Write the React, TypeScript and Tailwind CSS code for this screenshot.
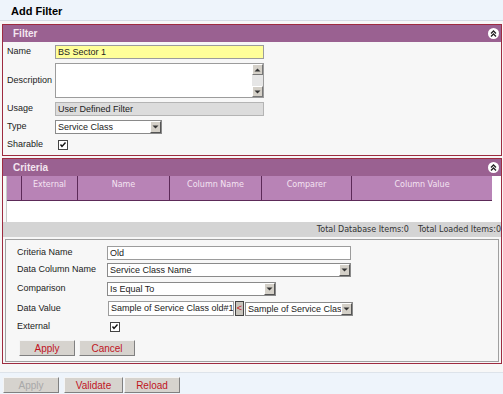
const Arrow: React.FC<{ up?: boolean }> = ({ up }) => (
    <svg width="7" height="4" viewBox="0 0 7 4">
        <path
            d={up ? "M0.5 3.5 L3.5 0.5 L6.5 3.5 Z" : "M0.5 0.5 L3.5 3.5 L6.5 0.5 Z"}
            fill="#333"
        />
    </svg>
);

const SelectBox: React.FC<{ text: string; w: string }> = ({ text, w }) => (
    <div className={`flex h-[14px] ${w} items-center border border-[#8a8a8a] bg-white`}>
        <span className="flex-1 overflow-hidden whitespace-nowrap pl-[2px] leading-[12px]">
            {text}
        </span>
        <div className="flex h-[12px] w-[11px] shrink-0 items-center justify-center border border-t-white border-l-white border-r-[#555] border-b-[#555] bg-[#d4d0c8]">
            <Arrow />
        </div>
    </div>
);

const Check: React.FC = () => (
    <div className="flex h-[10px] w-[10px] items-center justify-center border border-[#444] bg-white">
        <svg width="8" height="8" viewBox="0 0 8 8">
            <path d="M1.5 3.5 L3 5.5 L6.5 1.5" stroke="#111" strokeWidth="1.4" fill="none" />
        </svg>
    </div>
);

const Btn: React.FC<{ label: string; w: string; disabled?: boolean }> = ({ label, w, disabled }) => (
    <div
        className={`flex h-[16px] ${w} items-center justify-center border border-t-[#f4f4f4] border-l-[#f4f4f4] border-r-[#808080] border-b-[#808080] bg-[#d6d3ce] text-[10px] ${disabled ? "text-[#a8a8a8]" : "text-[#c0141e]"}`}>
        {label}
    </div>
);

const Collapse: React.FC = () => (
    <div className="flex h-[11px] w-[11px] items-center justify-center rounded-full bg-white">
        <svg width="7" height="7" viewBox="0 0 7 7">
            <path d="M1 3.5 L3.5 1 L6 3.5 M1 6.5 L3.5 4 L6 6.5" stroke="#222" strokeWidth="1.3" fill="none" />
        </svg>
    </div>
);

const PanelHead: React.FC<{ title: string }> = ({ title }) => (
    <div className="flex h-[17px] items-center justify-between bg-[#9a6191] pl-[10px] pr-[2px]">
        <span className="text-[10px] font-bold text-[#f3e6f0]">{title}</span>
        <Collapse />
    </div>
);

const cols = [
    ["", "w-[15px]"],
    ["External", "w-[56px]"],
    ["Name", "w-[92px]"],
    ["Column Name", "w-[92px]"],
    ["Comparer", "w-[90px]"],
    ["Column Value", "flex-1"],
];

export default function App() {
    return (
        <div className="h-[394px] w-[503px] overflow-hidden bg-[#f7f7f7] font-['Liberation_Sans',Arial,sans-serif] text-[9px] text-[#222]">
            <div className="h-[21px] border-b border-[#d6dde5] bg-[#eef4fb] pl-[11px] pt-[3px] text-[11px] font-bold text-black">
                Add Filter
            </div>

            {/* filter panel */}
            <div className="mt-[3px] ml-[2px] w-[500px] border border-[#9e2b40] bg-[#f7f7f7]">
                <PanelHead title="Filter" />
                <div className="flex flex-col gap-[4px] pt-[3px] pb-[3px] pl-[4px]">
                    <div className="flex items-center">
                        <span className="w-[48px]">Name</span>
                        <div className="h-[14px] w-[209px] border border-[#9c9c9c] bg-[#ffff99] pl-[2px] leading-[12px]">
                            BS Sector 1
                        </div>
                    </div>
                    <div className="flex items-center">
                        <span className="w-[48px]">Description</span>
                        <div className="flex h-[35px] w-[209px] border border-[#9c9c9c] bg-white">
                            <div className="flex-1" />
                            <div className="flex w-[11px] flex-col bg-[#e6e6e6]">
                                <div className="flex h-[11px] items-center justify-center border border-t-white border-l-white border-r-[#777] border-b-[#777] bg-[#d4d0c8]">
                                    <Arrow up />
                                </div>
                                <div className="flex-1" />
                                <div className="flex h-[11px] items-center justify-center border border-t-white border-l-white border-r-[#777] border-b-[#777] bg-[#d4d0c8]">
                                    <Arrow />
                                </div>
                            </div>
                        </div>
                    </div>
                    <div className="flex items-center">
                        <span className="w-[48px]">Usage</span>
                        <div className="h-[14px] w-[209px] border border-[#b4b4b4] bg-[#dcdcdc] pl-[2px] leading-[12px]">
                            User Defined Filter
                        </div>
                    </div>
                    <div className="flex items-center">
                        <span className="w-[48px]">Type</span>
                        <SelectBox text="Service Class" w="w-[107px]" />
                    </div>
                    <div className="flex h-[14px] items-center">
                        <span className="w-[51px]">Sharable</span>
                        <Check />
                    </div>
                </div>
            </div>

            {/* criteria panel */}
            <div className="mt-[2px] ml-[2px] w-[500px] border border-[#9e2b40] bg-[#f7f7f7]">
                <PanelHead title="Criteria" />
                <div className="ml-[3px] border-l border-[#c8c8c8] bg-white">
                    <div className="flex h-[25px] w-[485px] border-b border-[#5c2a58] bg-[#b883b6] font-['DejaVu_Sans',Verdana,sans-serif] text-[8px] text-[#f4e4f2]">
                        {cols.map(([label, w], i) => (
                            <div
                                key={i}
                                className={`${w} pt-[3px] text-center ${i < cols.length - 1 ? "border-r border-[#5c2a58]" : ""}`}>
                                {label}
                            </div>
                        ))}
                    </div>
                    <div className="h-[21px]" />
                </div>
                <div className="flex h-[15px] items-center justify-end whitespace-nowrap bg-[#d4d4d4] font-['DejaVu_Sans',Verdana,sans-serif] text-[8px] text-[#333]">
                    <span>Total Database Items:0</span>
                    <span className="ml-[9px]">Total Loaded Items:0</span>
                </div>
                <div className="mt-[2px] mb-[1px] ml-[2px] w-[494px] border border-[#a0a0a0] pt-[6px] pb-[5px] pl-[11px]">
                    <div className="flex flex-col">
                        <div className="flex items-center">
                            <span className="w-[90px]">Criteria Name</span>
                            <div className="h-[14px] w-[244px] border border-[#9c9c9c] bg-white pl-[2px] leading-[12px]">
                                Old
                            </div>
                        </div>
                        <div className="mt-[3px] flex items-center">
                            <span className="w-[90px]">Data Column Name</span>
                            <SelectBox text="Service Class Name" w="w-[244px]" />
                        </div>
                        <div className="mt-[5px] flex items-center">
                            <span className="w-[90px]">Comparison</span>
                            <SelectBox text="Is Equal To" w="w-[169px]" />
                        </div>
                        <div className="mt-[5px] flex items-center">
                            <span className="w-[91px]">Data Value</span>
                            <div className="h-[15px] w-[126px] overflow-hidden whitespace-nowrap border border-[#9c9c9c] bg-white pl-[2px] leading-[13px]">
                                Sample of Service Class old#1
                            </div>
                            <div className="ml-[1px] flex h-[15px] w-[9px] items-center justify-center border border-[#444] bg-[#c8c4bc] text-[#c0141e]">
                                &lt;
                            </div>
                            <div className="ml-[1px]">
                                <SelectBox text="Sample of Service Clas" w="w-[108px]" />
                            </div>
                        </div>
                        <div className="mt-[4px] flex h-[14px] items-center">
                            <span className="w-[93px]">External</span>
                            <Check />
                        </div>
                        <div className="mt-[6px] flex gap-[4px] pl-[2px]">
                            <Btn label="Apply" w="w-[56px]" />
                            <Btn label="Cancel" w="w-[56px]" />
                        </div>
                    </div>
                </div>
            </div>

            {/* bottom bar */}
            <div className="mt-[8px] h-[30px] border-t border-[#dde3ea] bg-[#eef4fb] pt-[4px] pl-[3px]">
                <div className="flex">
                    <Btn label="Apply" w="w-[56px]" disabled />
                    <div className="ml-[5px]">
                        <Btn label="Validate" w="w-[59px]" />
                    </div>
                    <div className="ml-[1px]">
                        <Btn label="Reload" w="w-[56px]" />
                    </div>
                </div>
            </div>
        </div>
    );
}
